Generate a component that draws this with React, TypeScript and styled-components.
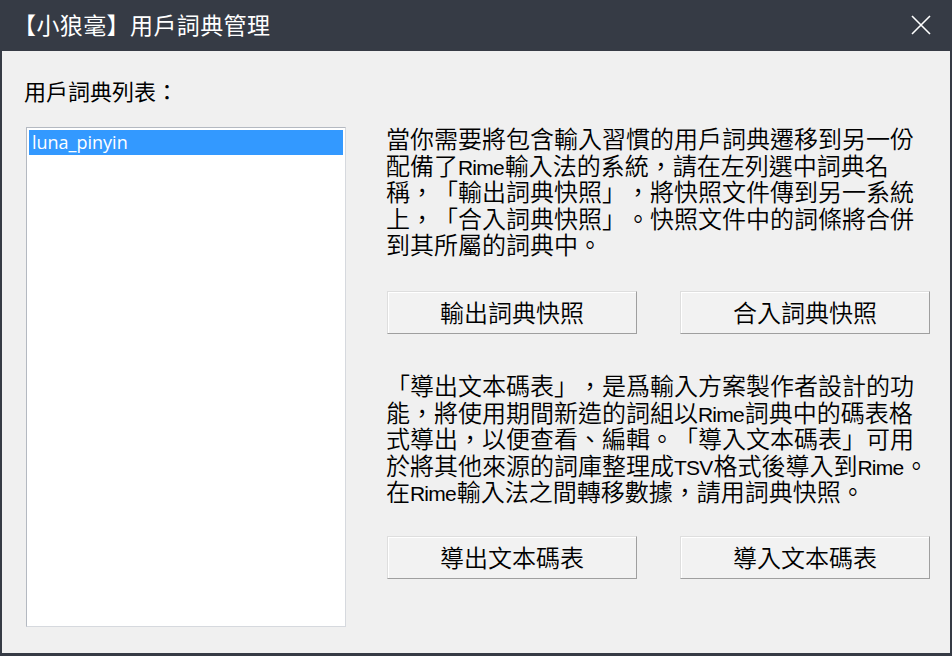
import React from 'react';
import styled, { createGlobalStyle } from 'styled-components';

const GlobalStyle = createGlobalStyle`
  html, body {
    margin: 0;
    padding: 0;
    background: #363b45;
  }
  * {
    box-sizing: border-box;
  }
`;

const FONT = `"Noto Sans CJK TC", "Noto Sans CJK SC", "Noto Sans", sans-serif`;

const Window = styled.div`
  width: 952px;
  height: 656px;
  display: flex;
  flex-direction: column;
  background: #363b45;
  font-family: ${FONT};
  color: #000;
  text-spacing-trim: space-all;
`;

const TitleBar = styled.div`
  height: 51px;
  flex-shrink: 0;
  display: flex;
  align-items: center;
  justify-content: space-between;
  padding: 0 20px 0 13px;
`;

const Title = styled.div`
  color: #fff;
  font-size: 23px;
  line-height: 1;
  margin-top: -2px;
  letter-spacing: 0.4px;
`;

const CloseIcon = styled.svg`
  width: 22px;
  height: 22px;
  margin-top: -2px;
`;

const Body = styled.div`
  flex: 1;
  margin: 0 2px 3px 2px;
  background: #f0f0f0;
  display: flex;
  padding: 27px 0 26px 24px;
`;

const LeftColumn = styled.div`
  width: 320px;
  display: flex;
  flex-direction: column;
`;

const Label = styled.div`
  font-size: 22px;
  line-height: 24px;
  height: 24px;
  margin-left: -2px;
  white-space: nowrap;
`;

const ListBox = styled.div`
  margin-top: 25px;
  flex: 1;
  background: #fff;
  border: 1px solid;
  border-color: #b4b9c1 #d6d9de #d6d9de #b4b9c1;
  padding: 2px;
`;

const ListItem = styled.div<{ selected?: boolean }>`
  height: 25px;
  line-height: 25px;
  padding-left: 3px;
  font-family: "Open Sans", "Noto Sans", sans-serif;
  font-size: 18px;
  color: ${p => (p.selected ? '#fff' : '#000')};
  background: ${p => (p.selected ? '#3399ff' : 'transparent')};
`;

const RightColumn = styled.div`
  margin-left: 40px;
  width: 544px;
  padding-top: 47px;
  display: flex;
  flex-direction: column;
`;

const Paragraph = styled.div<{ top: number }>`
  margin-top: ${p => p.top}px;
  display: flex;
  flex-direction: column;
  font-size: 24px;
  font-weight: 350;
`;

const Line = styled.div`
  height: 26.5px;
  line-height: 26.5px;
  white-space: nowrap;
  overflow: visible;
`;

const Latin = styled.span`
  font-family: "Liberation Sans", "Noto Sans", sans-serif;
  font-size: 21px;
  line-height: 0;
  letter-spacing: -0.8px;
  margin-right: 1px;
`;

const ButtonRow = styled.div<{ top: number }>`
  margin-top: ${p => p.top}px;
  display: grid;
  grid-template-columns: 250px 250px;
  column-gap: 43px;
  margin-left: 1px;
`;

const Button = styled.button`
  height: 43px;
  background: #f2f2f2;
  border: 1px solid;
  border-color: #dedede #9f9f9f #9f9f9f #dedede;
  box-shadow: inset 1px 1px 0 #fff;
  font-family: ${FONT};
  font-size: 24px;
  font-weight: 350;
  color: #000;
  padding: 0 0 2px 0;
  cursor: pointer;
`;

const App: React.FC = () => {
  return (
    <Window>
      <GlobalStyle />
      <TitleBar>
        <Title>【小狼毫】用戶詞典管理</Title>
        <CloseIcon viewBox="0 0 22 22">
          <path d="M2 2 L20 20 M20 2 L2 20" stroke="#fff" strokeWidth="1.6" fill="none" />
        </CloseIcon>
      </TitleBar>
      <Body>
        <LeftColumn>
          <Label>用戶詞典列表：</Label>
          <ListBox>
            <ListItem selected>luna_pinyin</ListItem>
          </ListBox>
        </LeftColumn>
        <RightColumn>
          <Paragraph top={0}>
            <Line>當你需要將包含輸入習慣的用戶詞典遷移到另一份</Line>
            <Line>配備了<Latin>Rime</Latin>輸入法的系統，請在左列選中詞典名</Line>
            <Line>稱，「輸出詞典快照」，將快照文件傳到另一系統</Line>
            <Line>上，「合入詞典快照」。快照文件中的詞條將合併</Line>
            <Line>到其所屬的詞典中。</Line>
          </Paragraph>
          <ButtonRow top={33.5}>
            <Button>輸出詞典快照</Button>
            <Button>合入詞典快照</Button>
          </ButtonRow>
          <Paragraph top={38}>
            <Line>「導出文本碼表」，是爲輸入方案製作者設計的功</Line>
            <Line>能，將使用期間新造的詞組以<Latin>Rime</Latin>詞典中的碼表格</Line>
            <Line>式導出，以便查看、編輯。「導入文本碼表」可用</Line>
            <Line>於將其他來源的詞庫整理成<Latin>TSV</Latin>格式後導入到<Latin>Rime</Latin>。</Line>
            <Line>在<Latin>Rime</Latin>輸入法之間轉移數據，請用詞典快照。</Line>
          </Paragraph>
          <ButtonRow top={31.5}>
            <Button>導出文本碼表</Button>
            <Button>導入文本碼表</Button>
          </ButtonRow>
        </RightColumn>
      </Body>
    </Window>
  );
};

export default App;
